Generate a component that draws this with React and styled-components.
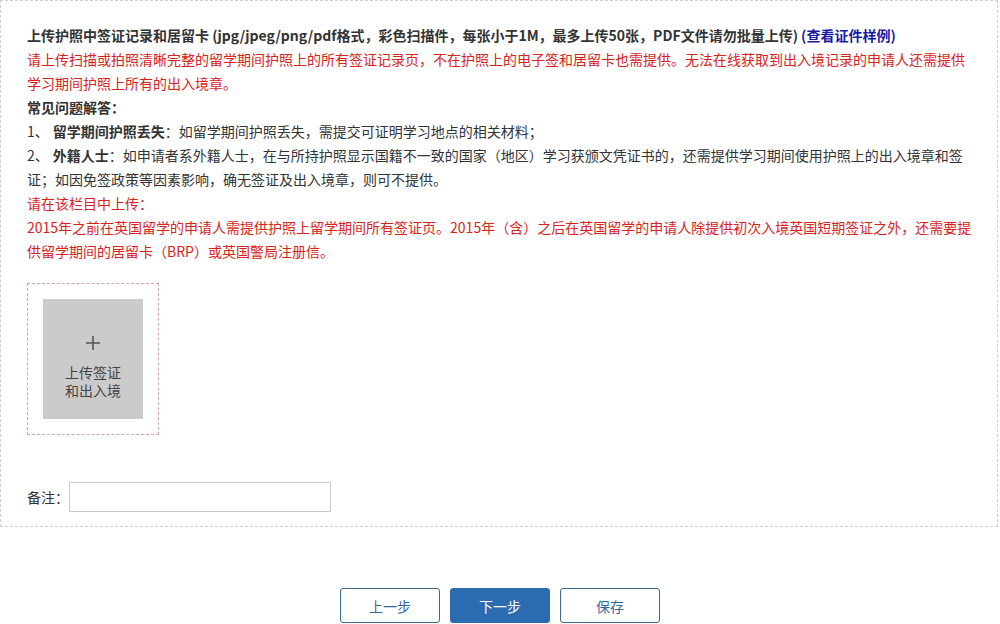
import React from 'react';
import styled, { createGlobalStyle } from 'styled-components';

const GlobalStyle = createGlobalStyle`
  body {
    margin: 0;
    background: #fff;
    font-family: "Noto Sans CJK SC", "Noto Sans", sans-serif;
    color: #333;
  }
`;

const Panel = styled.div`
  width: 998px;
  box-sizing: border-box;
  border: 1px dashed #cfcfcf;
  padding: 22px 21px 14px 26px;
`;

const Para = styled.p`
  margin: 0;
  font-size: 14px;
  line-height: 24px;
  color: ${({ red }) => (red ? '#d8231c' : '#333')};
  font-weight: ${({ bold }) => (bold ? 'bold' : 'normal')};
`;

const Link = styled.a`
  color: #1a1aa6;
  font-weight: bold;
  text-decoration: none;
  cursor: pointer;
`;

const Num = styled.span`
  margin-right: 4px;
`;

const UploadWrap = styled.div`
  margin-top: 20px;
  width: 132px;
  height: 152px;
  box-sizing: border-box;
  border: 1px dashed #d4a3a3;
  padding: 15px;
`;

const Tile = styled.div`
  width: 100px;
  height: 120px;
  background: #cbcbcb;
  display: flex;
  flex-direction: column;
  align-items: center;
  padding-top: 37px;
  box-sizing: border-box;
  color: #444;
  font-size: 14px;
  line-height: 18px;
  text-align: center;
  cursor: pointer;

  svg {
    margin-bottom: 13px;
  }
`;

const NoteRow = styled.div`
  margin-top: 47px;
  display: flex;
  align-items: center;
  font-size: 14px;
`;

const NoteInput = styled.input`
  width: 262px;
  height: 30px;
  box-sizing: border-box;
  border: 1px solid #ccc;
  outline: none;
  padding: 0 6px;
  font-size: 14px;
`;

const Actions = styled.div`
  margin-top: 61px;
  display: flex;
  justify-content: center;
  gap: 10px;
`;

const Button = styled.button`
  width: 100px;
  height: 35px;
  border-radius: 3px;
  border: 1px solid ${({ primary }) => (primary ? '#2b6cb0' : '#3b6b92')};
  background: ${({ primary }) => (primary ? '#2b6cb0' : '#fff')};
  color: ${({ primary }) => (primary ? '#fff' : '#2f6a9f')};
  font-family: inherit;
  font-size: 14px;
  cursor: pointer;
`;

const App = () => {
  return (
    <>
      <GlobalStyle />
      <Panel>
        <Para bold>
          上传护照中签证记录和居留卡 (jpg/jpeg/png/pdf格式，彩色扫描件，每张小于1M，最多上传50张，PDF文件请勿批量上传) <Link>(查看证件样例)</Link>
        </Para>
        <Para red>
          请上传扫描或拍照清晰完整的留学期间护照上的所有签证记录页，不在护照上的电子签和居留卡也需提供。无法在线获取到出入境记录的申请人还需提供学习期间护照上所有的出入境章。
        </Para>
        <Para bold>常见问题解答：</Para>
        <Para>
          <Num>1、</Num><b>留学期间护照丢失</b>：如留学期间护照丢失，需提交可证明学习地点的相关材料；
        </Para>
        <Para>
          <Num>2、</Num><b>外籍人士</b>：如申请者系外籍人士，在与所持护照显示国籍不一致的国家（地区）学习获颁文凭证书的，还需提供学习期间使用护照上的出入境章和签证；如因免签政策等因素影响，确无签证及出入境章，则可不提供。
        </Para>
        <Para red>请在该栏目中上传：</Para>
        <Para red>
          2015年之前在英国留学的申请人需提供护照上留学期间所有签证页。2015年（含）之后在英国留学的申请人除提供初次入境英国短期签证之外，还需要提供留学期间的居留卡（BRP）或英国警局注册信。
        </Para>

        <UploadWrap>
          <Tile>
            <svg width="14" height="14" viewBox="0 0 14 14">
              <path d="M7 0v14M0 7h14" stroke="#555" strokeWidth="1.6" fill="none" />
            </svg>
            <span>上传签证<br />和出入境</span>
          </Tile>
        </UploadWrap>

        <NoteRow>
          <span>备注：</span>
          <NoteInput type="text" />
        </NoteRow>
      </Panel>

      <Actions>
        <Button>上一步</Button>
        <Button primary>下一步</Button>
        <Button>保存</Button>
      </Actions>
    </>
  );
};

export default App;
